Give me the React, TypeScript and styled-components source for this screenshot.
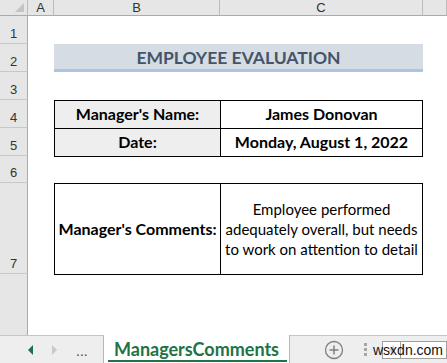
import * as React from 'react';
import styled, { createGlobalStyle } from 'styled-components';

const GlobalStyle = createGlobalStyle`
  html, body {
    margin: 0;
    padding: 0;
    background: #ffffff;
    overflow: hidden;
  }
`;

const Window = styled.div`
  width: 447px;
  height: 363px;
  display: flex;
  flex-direction: column;
  overflow: hidden;
  font-family: Lato, "Open Sans", sans-serif;
`;

const Sheet = styled.div`
  flex: 1;
  display: grid;
  grid-template-columns: 28px 26px 166px 203px 1fr;
  grid-template-rows: 16px 28px 28px 28px 28px 28px 27px 91px 1fr;
  background: #ffffff;
`;

const Corner = styled.div`
  grid-column: 1;
  grid-row: 1;
  background: #e6e6e6;
  border-right: 1px solid #bcbcbc;
  border-bottom: 1px solid #ababab;
  box-sizing: border-box;
  position: relative;
  &::after {
    content: '';
    position: absolute;
    right: 3px;
    bottom: 3px;
    border-left: 9px solid transparent;
    border-bottom: 9px solid #c4c4c4;
  }
`;

const ColHeader = styled.div<{ $col: number }>`
  grid-column: ${p => p.$col};
  grid-row: 1;
  background: #e6e6e6;
  border-right: 1px solid #bcbcbc;
  border-bottom: 1px solid #ababab;
  box-sizing: border-box;
  display: flex;
  align-items: center;
  justify-content: center;
  font-family: "Liberation Sans", Arial, sans-serif;
  font-size: 13px;
  color: #333333;
`;

const RowHeader = styled.div<{ $row: number }>`
  grid-column: 1;
  grid-row: ${p => p.$row};
  background: #e6e6e6;
  border-right: 1px solid #ababab;
  border-bottom: 1px solid #c8c8c8;
  box-sizing: border-box;
  display: flex;
  align-items: flex-end;
  justify-content: center;
  padding-bottom: 2px;
  font-family: "Liberation Sans", Arial, sans-serif;
  font-size: 13px;
  color: #333333;
`;

const RowFiller = styled(RowHeader)`
  border-bottom: none;
`;

const Title = styled.div`
  grid-column: 3 / 5;
  grid-row: 3;
  background: #d6dce4;
  border-bottom: 3px solid #a9c7e4;
  box-sizing: border-box;
  display: flex;
  align-items: center;
  justify-content: center;
  padding-top: 2px;
  font-size: 17.5px;
  font-weight: 700;
  color: #44546a;
`;

const Table = styled.div<{ $row: string }>`
  grid-column: 3 / 5;
  grid-row: ${p => p.$row};
  display: grid;
  grid-template-columns: 166px 1fr;
  grid-auto-rows: 1fr;
  border: 1px solid #000000;
  margin-bottom: -1px;
  box-sizing: border-box;
`;

const Cell = styled.div<{ $label?: boolean; $bold?: boolean; $shaded?: boolean }>`
  display: flex;
  align-items: center;
  justify-content: center;
  text-align: center;
  background: ${p => (p.$shaded ? '#eeeeee' : '#ffffff')};
  border-right: ${p => (p.$label ? '1px solid #000000' : 'none')};
  border-bottom: 1px solid #000000;
  font-size: ${p => (p.$bold ? '16px' : '15px')};
  line-height: 20px;
  font-weight: ${p => (p.$bold ? 700 : 400)};
  color: #000000;
  &:nth-last-child(-n + 2) {
    border-bottom: none;
  }
`;

const TabBar = styled.div`
  height: 28px;
  flex-shrink: 0;
  display: flex;
  align-items: stretch;
  background: #eeeeee;
  border-top: 1px solid #c6c6c6;
  box-sizing: border-box;
  position: relative;
`;

const NavArea = styled.div`
  width: 103px;
  display: flex;
  align-items: center;
  padding-left: 28px;
  gap: 19px;
  box-sizing: border-box;
`;

const Arrow = styled.span<{ $active?: boolean; $dir: 'left' | 'right' }>`
  width: 0;
  height: 0;
  border-top: 5px solid transparent;
  border-bottom: 5px solid transparent;
  ${p =>
    p.$dir === 'left'
      ? `border-right: 5px solid ${p.$active ? '#1e7145' : '#c9c9c9'};`
      : `border-left: 5px solid ${p.$active ? '#1e7145' : '#c9c9c9'};`}
`;

const Dots = styled.span`
  font-family: "Liberation Sans", Arial, sans-serif;
  font-size: 14px;
  color: #444444;
  margin-top: 2px;
`;

const Tab = styled.div`
  width: 187px;
  margin-top: -1px;
  background: #ffffff;
  border-left: 1px solid #b8b8b8;
  border-right: 1px solid #b8b8b8;
  box-sizing: border-box;
  display: flex;
  align-items: center;
  justify-content: center;
  font-size: 18px;
  font-weight: 700;
  color: #217346;
  position: relative;
  &::after {
    content: '';
    position: absolute;
    left: 4px;
    right: 2px;
    bottom: 1px;
    height: 2px;
    background: #217346;
  }
`;

const RightArea = styled.div`
  flex: 1;
  min-width: 0;
  display: flex;
  align-items: center;
  padding-left: 34px;
  position: relative;
`;

const Grip = styled.span`
  margin-left: 20px;
  width: 3px;
  height: 14px;
  background: repeating-linear-gradient(
    to bottom,
    #a6a6a6 0 3px,
    transparent 3px 5px
  );
`;

const ScrollBox = styled.div`
  margin-left: 15px;
  width: 19px;
  height: 18px;
  border: 1px solid #a0a0a0;
  background: #ffffff;
  box-sizing: border-box;
  display: flex;
  align-items: center;
  justify-content: center;
`;

const ScrollTrack = styled.div`
  flex: 1;
  height: 18px;
  border: 1px solid #a0a0a0;
  border-left: none;
  background: #ffffff;
  box-sizing: border-box;
`;

const Watermark = styled.span`
  position: absolute;
  left: 83px;
  top: 6px;
  font-family: "Liberation Sans", Arial, sans-serif;
  font-size: 14px;
  line-height: 16px;
  white-space: nowrap;
  color: #111111;
`;

const PlusIcon = () => (
  <svg width="20" height="20" viewBox="0 0 20 20">
    <circle cx="10" cy="10" r="8.5" fill="none" stroke="#808080" strokeWidth="1.3" />
    <path d="M10 5.5v9M5.5 10h9" stroke="#808080" strokeWidth="1.5" />
  </svg>
);

const rows = ['1', '2', '3', '4', '5', '6', '7'];

export default function App() {
  return (
    <Window>
      <GlobalStyle />
      <Sheet>
        <Corner />
        <ColHeader $col={2}>A</ColHeader>
        <ColHeader $col={3}>B</ColHeader>
        <ColHeader $col={4}>C</ColHeader>
        <ColHeader $col={5} />
        {rows.map((label, i) => (
          <RowHeader key={label} $row={i + 2}>{label}</RowHeader>
        ))}
        <RowFiller $row={9} />

        <Title>EMPLOYEE EVALUATION</Title>

        <Table $row="5 / 7">
          <Cell $label $bold $shaded>Manager's Name:</Cell>
          <Cell $bold>James Donovan</Cell>
          <Cell $label $bold $shaded>Date:</Cell>
          <Cell $bold>Monday, August 1, 2022</Cell>
        </Table>

        <Table $row="8">
          <Cell $label $bold>Manager's Comments:</Cell>
          <Cell>
            Employee performed
            <br />
            adequately overall, but needs
            <br />
            to work on attention to detail
          </Cell>
        </Table>
      </Sheet>

      <TabBar>
        <NavArea>
          <Arrow $dir="left" $active />
          <Arrow $dir="right" />
          <Dots>...</Dots>
        </NavArea>
        <Tab>ManagersComments</Tab>
        <RightArea>
          <PlusIcon />
          <Grip />
          <ScrollBox>
            <Arrow $dir="left" />
          </ScrollBox>
          <ScrollTrack />
          <Watermark>wsxdn.com</Watermark>
        </RightArea>
      </TabBar>
    </Window>
  );
}
